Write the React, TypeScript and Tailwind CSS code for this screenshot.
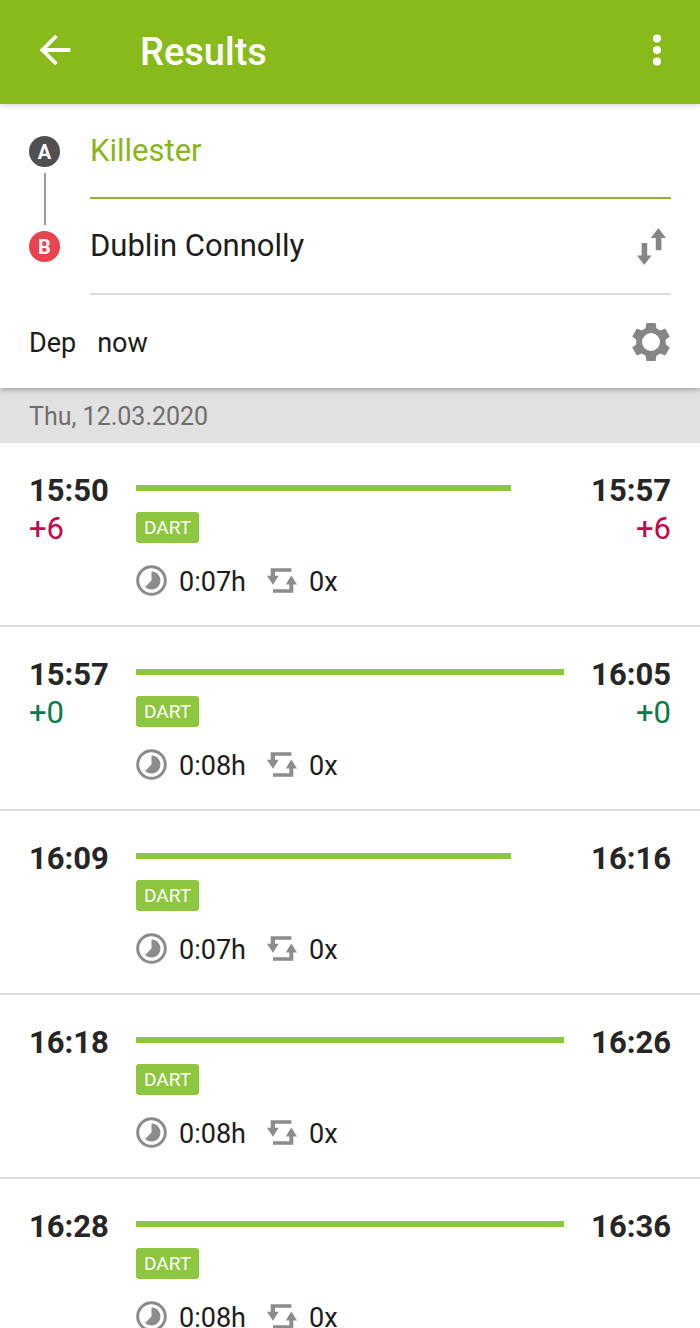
import { useState } from "react"

interface Trip {
  dep: string
  arr: string
  minutes: number
  changes: number
  delay?: number
}

const TRIPS: Trip[] = [
  { dep: "15:50", arr: "15:57", minutes: 7, changes: 0, delay: 6 },
  { dep: "15:57", arr: "16:05", minutes: 8, changes: 0, delay: 0 },
  { dep: "16:09", arr: "16:16", minutes: 7, changes: 0 },
  { dep: "16:18", arr: "16:26", minutes: 8, changes: 0 },
  { dep: "16:28", arr: "16:36", minutes: 8, changes: 0 },
]

const longest = Math.max(...TRIPS.map((t) => t.minutes))

function BackIcon() {
  return (
    <svg viewBox="0 0 24 24" className="size-[46px]" fill="currentColor" aria-hidden="true">
      <path d="M20 11H7.83l5.59-5.59L12 4l-8 8 8 8 1.41-1.41L7.83 13H20v-2z" />
    </svg>
  )
}

function MoreIcon() {
  return (
    <svg viewBox="0 0 24 24" className="size-[46px]" fill="currentColor" aria-hidden="true">
      <circle cx="12" cy="6" r="2.1" />
      <circle cx="12" cy="12" r="2.1" />
      <circle cx="12" cy="18" r="2.1" />
    </svg>
  )
}

function SwapIcon() {
  return (
    <svg viewBox="0 0 88 112" className="h-[37px] w-[29px]" fill="currentColor" aria-hidden="true">
      <path d="M65 0l23 30H74v37H57V30H42z" />
      <path d="M14 45h17v38h13l-22 29L0 83h14z" />
    </svg>
  )
}

function GearIcon() {
  return (
    <svg viewBox="-20 -20 40 40" className="size-10" aria-hidden="true">
      <circle r="11.8" fill="none" stroke="currentColor" strokeWidth="5.6" />
      {[0, 60, 120, 180, 240, 300].map((deg) => (
        <path
          key={deg}
          d="M-4.6 -19H4.6L5.4 -13.8L8 -11.5H-8L-5.4 -13.8z"
          fill="currentColor"
          transform={`rotate(${deg})`}
        />
      ))}
    </svg>
  )
}

function DurationIcon() {
  return (
    <svg viewBox="-15.5 -15.5 31 31" className="size-[31px] text-[#8c8c8c]" aria-hidden="true">
      <circle r="13.8" fill="none" stroke="currentColor" strokeWidth="3" />
      <path d="M0 0V-9A9 9 0 1 1 -6.4 6.4z" fill="currentColor" />
    </svg>
  )
}

function ChangesIcon() {
  return (
    <svg viewBox="0 0 90 74" className="h-[25px] w-[30px] text-[#8c8c8c]" fill="currentColor" aria-hidden="true">
      <path d="M11 0H73V11H24V23H35L18 50L0 23H11z" />
      <path d="M79 74H18V63H67V49H56L73 22L90 49H79z" />
    </svg>
  )
}

function TimeColumn({ time, delay, label }: { time: string; delay?: number; label: string }) {
  return (
    <div className="text-[31px] leading-[38px]">
      <time className="block font-bold text-[#262626]" aria-label={`${label} ${time}`}>
        {time}
      </time>
      {delay !== undefined && (
        <p className={delay > 0 ? "text-[#c4034b]" : "text-[#0b7a4b]"}>+{delay}</p>
      )}
    </div>
  )
}

function TripRow({ trip }: { trip: Trip }) {
  return (
    <li className="border-b-2 border-[#dcdcdc]">
      <a href="#trip" className="grid grid-cols-[80px_1fr_80px] gap-[27px] p-[29px]">
        <TimeColumn time={trip.dep} delay={trip.delay} label="Departure" />
        <div className="pt-[13px]">
          <div className="h-1.5 bg-[#8dc63f]" style={{ width: `${(trip.minutes / longest) * 100}%` }} />
          <span className="mt-[21px] flex h-[31px] w-[63px] items-center justify-center rounded-[3px] bg-[#8dc63f] pt-0.5 text-[19px] text-white">
            DART
          </span>
          <div className="mt-[22px] flex h-[31px] items-center text-[27px] text-[#1c1c1c]">
            <DurationIcon />
            <span className="ml-3 pt-1">0:{String(trip.minutes).padStart(2, "0")}h</span>
            <span className="ml-[21px]">
              <ChangesIcon />
            </span>
            <span className="ml-3 pt-1">{trip.changes}x</span>
          </div>
        </div>
        <div className="text-right">
          <TimeColumn time={trip.arr} delay={trip.delay} label="Arrival" />
        </div>
      </a>
    </li>
  )
}

export default function App() {
  const [from, setFrom] = useState("Killester")
  const [to, setTo] = useState("Dublin Connolly")

  const swap = () => {
    setFrom(to)
    setTo(from)
  }

  return (
    <div className="flex h-screen flex-col overflow-hidden bg-white font-['Roboto',sans-serif]">
      <header className="relative z-20 flex h-[104px] shrink-0 items-center bg-[#89ba1c] px-5 text-white shadow-[0_1px_6px_rgba(0,0,0,0.2)]">
        <button type="button" aria-label="Back" className="ml-3 pb-1">
          <BackIcon />
        </button>
        <h1 className="ml-[62px] flex-1 text-[38px] font-medium">Results</h1>
        <button type="button" aria-label="More options" className="pb-1">
          <MoreIcon />
        </button>
      </header>

      <form className="relative z-10 shrink-0 bg-white px-[29px] text-[#1c1c1c] shadow-[0_1px_6px_rgba(0,0,0,0.35)]">
        <div className="flex">
          <div className="flex w-[61px] flex-col pt-8">
            <label
              htmlFor="from"
              className="flex size-[31px] items-center justify-center rounded-full bg-[#505050] text-[20px] font-bold text-white"
            >
              A
            </label>
            <span className="my-1.5 ml-[15px] h-[52px] w-0.5 bg-[#9a9a9a]" />
            <label
              htmlFor="to"
              className="flex size-[31px] items-center justify-center rounded-full bg-[#e8434f] text-[20px] font-bold text-white"
            >
              B
            </label>
          </div>
          <div className="min-w-0 flex-1 text-[31px]">
            <div className="flex h-[95px] items-center border-b-2 border-[#92b035] pt-0.5">
              <input
                id="from"
                value={from}
                onChange={(e) => setFrom(e.target.value)}
                className="w-full text-[#89b41c] outline-none"
              />
            </div>
            <div className="flex h-24 items-center border-b-2 border-[#dcdcdc]">
              <input
                id="to"
                value={to}
                onChange={(e) => setTo(e.target.value)}
                className="min-w-0 flex-1 outline-none"
              />
              <button
                type="button"
                aria-label="Swap stations"
                onClick={swap}
                className="flex w-10 justify-center text-[#868686]"
              >
                <SwapIcon />
              </button>
            </div>
          </div>
        </div>
        <div className="flex h-[93px] items-center pt-1 text-[27px]">
          <button type="button">Dep</button>
          <button type="button" className="ml-[21px]">
            now
          </button>
          <button type="button" aria-label="Settings" className="ml-auto pb-1 text-[#868686]">
            <GearIcon />
          </button>
        </div>
      </form>

      <main className="min-h-0 flex-1 overflow-y-auto [scrollbar-width:none]">
        <h2 className="flex h-[55px] items-center bg-[#e1e1e1] px-[29px] pt-0.5 text-[25px] text-[#6e6e6e]">
          Thu, 12.03.2020
        </h2>
        <ul>
          {TRIPS.map((trip) => (
            <TripRow key={trip.dep} trip={trip} />
          ))}
        </ul>
      </main>
    </div>
  )
}
